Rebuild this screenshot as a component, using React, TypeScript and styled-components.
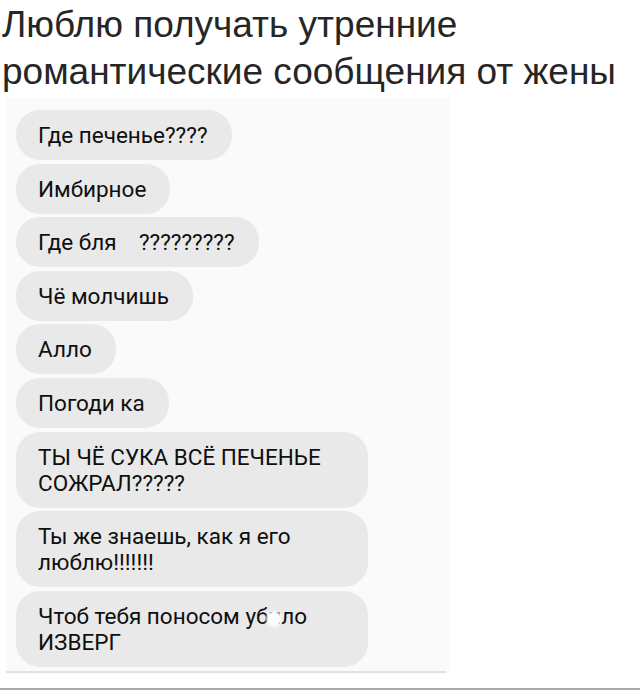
import styled, { createGlobalStyle } from "styled-components";

const GlobalStyle = createGlobalStyle`
  body {
    margin: 0;
    background: #ffffff;
  }
`;

type Message = {
  text: string;
  full?: boolean;
  blot?: boolean;
};

const messages: Message[] = [
  { text: "Где печенье????" },
  { text: "Имбирное" },
  { text: "Где бля    ?????????" },
  { text: "Чё молчишь" },
  { text: "Алло" },
  { text: "Погоди ка" },
  { text: "ТЫ ЧЁ СУКА ВСЁ ПЕЧЕНЬЕ\nСОЖРАЛ?????", full: true },
  { text: "Ты же знаешь, как я его\nлюблю!!!!!!!", full: true },
  { text: "Чтоб тебя поносом убило\nИЗВЕРГ", full: true, blot: true },
];

export default function App() {
  return (
    <>
      <GlobalStyle />
      <Page>
        <Title>
          Люблю получать утренние
          <br />
          романтические сообщения от жены
        </Title>
        <Chat>
          <Thread>
            {messages.map((m, i) => (
              <Bubble key={i} $full={m.full}>
                {m.blot ? (
                  <>
                    Чтоб тебя поносом уб
                    <Smudged>
                      и<Blot />
                    </Smudged>
                    ло{"\n"}ИЗВЕРГ
                  </>
                ) : (
                  m.text
                )}
              </Bubble>
            ))}
          </Thread>
        </Chat>
        <BottomEdge />
      </Page>
    </>
  );
}

const Page = styled.div`
  width: 640px;
  height: 690px;
  display: flex;
  flex-direction: column;
  overflow: hidden;
`;

const Title = styled.h1`
  margin: 0;
  padding: 1px 0 0 2px;
  height: 98px;
  box-sizing: border-box;
  font-family: "Liberation Sans", Arial, sans-serif;
  font-weight: 400;
  font-size: 37px;
  line-height: 47px;
  color: #262626;
  white-space: nowrap;
`;

const Chat = styled.div`
  width: 444px;
  margin-left: 6px;
  background: #fafafa;
  flex: 1;
  display: flex;
  flex-direction: column;
`;

const Thread = styled.div`
  display: flex;
  flex-direction: column;
  align-items: flex-start;
  gap: 3.6px;
  padding: 12px 0 4px 10px;
  border-bottom: 2px solid #e2e2e2;
  margin-right: 4px;
`;

const Bubble = styled.div<{ $full?: boolean }>`
  box-sizing: border-box;
  width: ${(p) => (p.$full ? "352px" : "auto")};
  padding: 12px 24px 12px 22px;
  background: #e9e9e9;
  border-radius: 24px;
  font-family: Roboto, "Noto Sans", sans-serif;
  font-size: 22.5px;
  line-height: 26px;
  color: #0f0f0f;
  white-space: pre-wrap;
`;

const Smudged = styled.span`
  position: relative;
`;

const Blot = styled.span`
  position: absolute;
  left: 0px;
  top: 10px;
  width: 12px;
  height: 12px;
  border-radius: 50%;
  background: #ffffff;
  box-shadow: 0 0 3px 2px #fafafa;
`;

const BottomEdge = styled.div`
  height: 2px;
  margin-top: 14px;
  background: #a8a8a8;
`;
